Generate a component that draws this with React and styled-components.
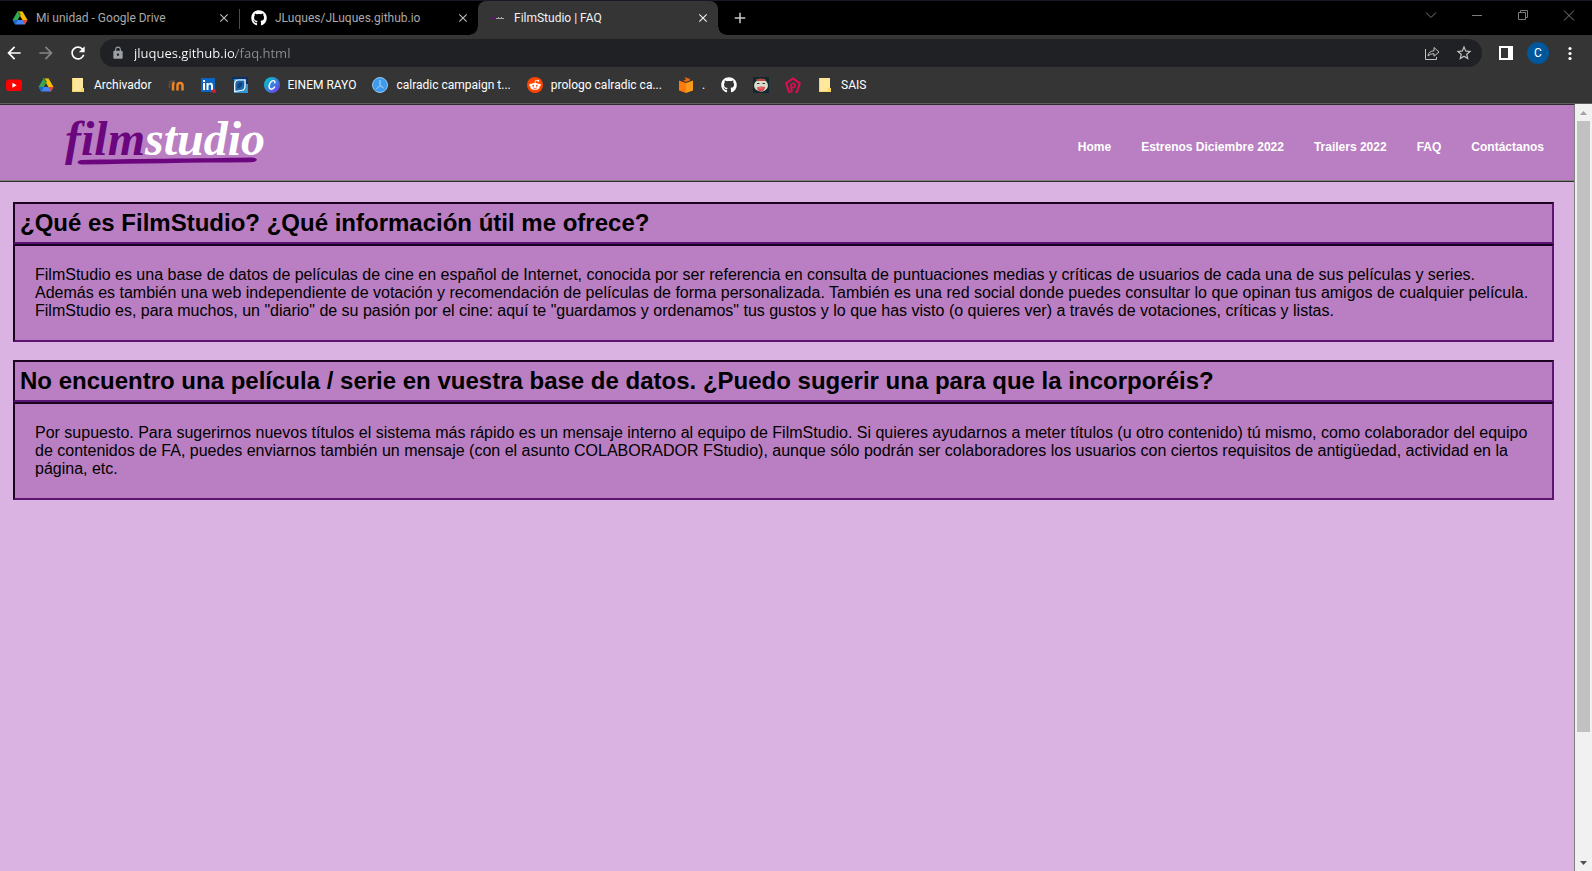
import React from "react";
import styled, { createGlobalStyle, css } from "styled-components";
import { FaGithub } from "react-icons/fa";
import { MdArrowBack, MdArrowForward, MdRefresh, MdLock, MdStarBorder, MdClose, MdAdd } from "react-icons/md";

const GlobalStyle = createGlobalStyle`
  *, *::before, *::after { box-sizing: border-box; }
  body { margin: 0; background: #dab3e2; }
  button { font: inherit; color: inherit; border: 0; padding: 0; background: none; cursor: pointer; }
  svg { display: block; flex: none; }
`;

const uiFont = `"Segoe UI", Roboto, "Noto Sans", sans-serif`;
const addressFont = `"Segoe UI", "Open Sans", "Noto Sans", sans-serif`;

/* ---------- browser window ---------- */

const Window = styled.div`
  display: flex;
  flex-direction: column;
  height: 100vh;
  font-family: ${uiFont};
  font-size: 12px;
  line-height: 16px;
`;

const TabStrip = styled.div`
  display: flex;
  height: 35px;
  background: #000;
  border-top: 1px solid #191926;
  color: #a9a9a9;
`;

const Tab = styled.div`
  position: relative;
  display: flex;
  align-items: center;
  gap: 8px;
  width: 239px;
  padding: 0 8px 0 12px;
  ${(p) => p.$divided && css`
    &::after { content: ""; position: absolute; right: -1px; top: 8px; width: 1px; height: 20px; background: #4a4a4a; }`}
  ${(p) => p.$active && css`
    width: 240px;
    color: #f1f1f1;
    background: #353535;
    border-radius: 8px 8px 0 0;
    &::before, &::after { content: ""; position: absolute; bottom: 0; width: 8px; height: 8px; }
    &::before { left: -8px; background: radial-gradient(circle at 0 0, #000 7px, #353535 8px); }
    &::after { right: -8px; background: radial-gradient(circle at 100% 0, #000 7px, #353535 8px); }
  `}
`;

const TabTitle = styled.button`
  flex: 1;
  min-width: 0;
  text-align: left;
  white-space: nowrap;
`;

const TabClose = styled.button`
  display: grid;
  place-items: center;
  width: 14px;
  height: 16px;
  color: ${(p) => (p.$active ? "#f1f1f1" : "#bdbdbd")};
`;

const NewTab = styled.button`
  display: grid;
  place-items: center;
  width: 28px;
  margin-left: 8px;
  color: #c9c9c9;
`;

const WindowButtons = styled.div`
  display: flex;
  align-items: flex-start;
  margin-left: auto;
`;

const WindowButton = styled.button`
  display: grid;
  place-items: center;
  width: 46px;
  height: 28px;
  color: #7b7b7b;
`;

const Toolbar = styled.div`
  display: flex;
  align-items: center;
  height: 36px;
  padding: 0 6px 0 0;
  background: #353535;
  color: #fff;
`;

const ToolButton = styled.button`
  display: grid;
  place-items: center;
  width: 32px;
  height: 28px;
  color: ${(p) => (p.$dim ? "#858585" : "#fff")};
`;

const Navigation = styled.div`
  display: flex;
  margin: 0 6px 0 -2px;
`;

const AddressBar = styled.div`
  flex: 1;
  display: flex;
  align-items: center;
  height: 28px;
  padding: 0 2px 0 11px;
  border-radius: 14px;
  background: #202124;
  color: #9aa0a6;
`;

const AddressInput = styled.input`
  flex: 1;
  min-width: 0;
  height: 20px;
  margin-left: 9px;
  padding: 0;
  border: 0;
  outline: 0;
  font: 13px/20px ${addressFont};
  color: #fff;
  background: linear-gradient(90deg, #fff 102px, #8d8d8e 102px);
  -webkit-background-clip: text;
  background-clip: text;
  -webkit-text-fill-color: transparent;
`;

const Actions = styled.div`
  display: flex;
  align-items: center;
  margin-left: 8px;
`;

const Avatar = styled.span`
  display: grid;
  place-items: center;
  width: 22px;
  height: 22px;
  border-radius: 50%;
  background: #01579b;
  color: #fff;
`;

const BookmarksBar = styled.nav`
  display: flex;
  align-items: center;
  gap: 16px;
  height: 33px;
  padding: 0 6px 4px;
  background: #353535;
  border-bottom: 1px solid #5e5e5e;
  color: #fff;
`;

const Bookmark = styled.a`
  display: flex;
  align-items: center;
  gap: 8px;
  height: 24px;
  color: inherit;
  text-decoration: none;
  white-space: nowrap;
`;

const Viewport = styled.div`
  flex: 1;
  display: flex;
  min-height: 0;
`;

const Scrollbar = styled.div`
  display: flex;
  flex-direction: column;
  width: 17px;
  background: #f1f1f1;
`;

const ScrollArrow = styled.button`
  display: grid;
  place-items: center;
  height: 17px;
  color: ${(p) => (p.$dim ? "#a3a3a3" : "#505050")};
`;

const ScrollTrack = styled.div`
  flex: 1;
  display: flex;
  flex-direction: column;
  padding: 0 2px;
  &::before { content: ""; flex: 5; background: #c1c1c1; }
  &::after { content: ""; flex: 1; }
`;

/* ---------- web page ---------- */

const Page = styled.div`
  flex: 1;
  min-width: 0;
  overflow: hidden;
  border-top: 1px solid #2d2d2d;
  border-right: 1px solid #808080;
  background: #dab3e2;
  color: #000;
  font-family: Arial, "Liberation Sans", sans-serif;
`;

const SiteHeader = styled.header`
  display: flex;
  align-items: center;
  justify-content: space-between;
  height: 77px;
  padding: 0 30px 0 60px;
  background: #b97fc2;
  border-bottom: 1px solid #2f2f2f;
  box-shadow: inset 0 -1px #80807c;
`;

const SiteNav = styled.nav`
  display: flex;
  gap: 30px;
  padding-top: 8px;
`;

const SiteLink = styled.a`
  color: #fff;
  font-size: 12px;
  line-height: 16px;
  font-weight: 700;
  text-decoration: none;
`;

const Questions = styled.main`
  display: flex;
  flex-direction: column;
  gap: 18px;
  padding: 20px 20px 20px 13px;
`;

const framed = css`
  margin: 0;
  border: 2px solid;
  border-color: #1b0220 #5b1573 #5b1573 #1b0220;
  background: #b97fc2;
`;

const Question = styled.h2`
  ${framed}
  padding: 5px;
  font-size: 24px;
  line-height: 28px;
`;

const Answer = styled.p`
  ${framed}
  padding: 20px;
  font-size: 16px;
  line-height: 18px;
`;

/* ---------- drawings ---------- */

const Svg = ({ size = 16, children, ...rest }) => (
  <svg width={size} height={size} viewBox="0 0 16 16" fill="none" aria-hidden="true" {...rest}>{children}</svg>
);

const DriveIcon = () => (
  <Svg>
    <path d="M5.4 1.5h5.2L8 6z" fill="#188038" />
    <path d="M5.4 1.5 8 6 3.2 14.5.6 10z" fill="#34a853" />
    <path d="M10.6 1.5 15.5 10h-5.1L5.4 1.5z" fill="#fbbc04" />
    <path d="M5.4 1.5h1.5L8.8 4.8 8 6z" fill="#188038" />
    <path d="M5.7 10h9.8l-2.6 4.5H3.2z" fill="#4285f4" />
    <path d="M10.4 10h5.1l-2.6 4.5z" fill="#ea4335" />
    <path d="M5.7 10H.6l2.6 4.5z" fill="#1967d2" />
  </Svg>
);
const YoutubeIcon = () => (
  <Svg>
    <rect y="2.5" width="16" height="11.5" rx="3" fill="#f00" />
    <path d="M6.4 5.7v5l4.3-2.5z" fill="#fff" />
  </Svg>
);
const FolderIcon = () => (
  <Svg>
    <path d="M2 1h11v10h1v4H2z" fill="#ffe79b" />
    <path d="M2.5 1v13.5H11" stroke="#f3d06b" />
    <path d="M11 11h3v4h-3z" fill="#fbd65e" />
  </Svg>
);
const MoodleIcon = () => (
  <Svg>
    <path d="M0 4.5 6 2.500l1.500 1.500L3 6.500z" fill="#514a46" />
    <path d="M1.500 6v5" stroke="#6b4b37" strokeWidth="1.500" />
    <path d="M5 13.500V8m0 0q0-2 1.700-2m2.800 7.500V8.500q0-2.500 2.500-2.500t2.500 2.500v5" stroke="#ef8523" strokeWidth="2.500" />
  </Svg>
);
const LinkedinIcon = () => (
  <Svg>
    <rect x="1" y="1" width="14" height="14" fill="#0a66c2" />
    <path d="M3 6h2v7H3zM3 3h2v2H3zM6.500 6h2v1q1-1.300 2.500-1.200 2 .2 2 3V13h-2V9q0-1.400-1.200-1.400T8.500 9v4h-2z" fill="#fff" />
    <circle cx="14" cy="14" r="2" fill="#d81e2c" />
  </Svg>
);
const BlueBoxIcon = () => (
  <Svg>
    <path d="M0 0h16v16H2V2z" fill="#3595d3" />
    <path d="M0 1h15V0v7" stroke="#0c2f66" strokeWidth="2" />
    <path d="M2.700 14.500V7q0-4 4-4H13v6q0 4.500-4.500 4.500z" stroke="#fff" strokeWidth="1.200" fill="#1c68ac" />
    <path d="M5.500 11.500V8Q6 5.500 9 5.500h1.500q0 5-5 6z" fill="#12417b" />
  </Svg>
);
const CanvaIcon = () => (
  <Svg>
    <defs>
      <linearGradient id="canva" x1="0" y1="0" x2="1" y2="1">
        <stop offset="0.1" stopColor="#00c4cc" /><stop offset="0.55" stopColor="#3f7be0" /><stop offset="1" stopColor="#7d2ae8" />
      </linearGradient>
    </defs>
    <circle cx="8" cy="8" r="8" fill="url(#canva)" />
    <path d="M10.800 5.800q.4-2.400-1.600-2.200C6.700 4 5 7 5.100 9.800c.2 3.300 3.700 3 5.500.2" stroke="#fff" strokeWidth="1.400" strokeLinecap="round" />
  </Svg>
);
const ClockIcon = () => (
  <Svg>
    <circle cx="8" cy="8" r="7.500" fill="#3d9cf0" stroke="#9bc3e6" />
    <path d="M8 3v5.500M8 8.500 4.500 12M8 8.500l3.500 2.500" stroke="#b5d9f7" strokeWidth="1" />
  </Svg>
);
const RedditIcon = () => (
  <Svg>
    <circle cx="8" cy="8" r="8" fill="#ff4500" />
    <ellipse cx="8" cy="9.400" rx="4.700" ry="3.400" fill="#fff" />
    <circle cx="3.400" cy="7.900" r="1.200" fill="#fff" /><circle cx="12.600" cy="7.900" r="1.200" fill="#fff" />
    <path d="M8 6.200 8.700 3.200l2.400.5" stroke="#fff" strokeWidth="0.8" /><circle cx="11.300" cy="3.700" r="1" fill="#fff" />
    <circle cx="6.200" cy="8.700" r="0.9" fill="#ff4500" /><circle cx="9.800" cy="8.700" r="0.9" fill="#ff4500" />
    <path d="M6 10.900q2 1.300 4 0" stroke="#ff4500" strokeWidth="0.7" />
  </Svg>
);
const BookIcon = () => (
  <Svg>
    <path d="M1 3.500 8 6v10l-7-2.500z" fill="#ff7a0c" />
    <path d="M8 6l7-2.500v10L8 16z" fill="#f99a1b" />
    <path d="M6.500 0 12 2v1.500L8 5 5 3.500 8 2.500z" fill="#ec6508" />
  </Svg>
);
const FaceIcon = () => (
  <Svg>
    <path d="M0 0h16v16H0z" fill="#122830" />
    <ellipse cx="8" cy="8.500" rx="7" ry="6" fill="#d7ddcb" />
    <path d="M3 2.500 7 1.500l5 .5 1 2H4z" fill="#b8493f" />
    <path d="M4 10.500q4-1.500 8-.5-.5 4.500-4 4.500t-4-4z" fill="#d9484c" />
    <path d="M4 6.500h2.500M9.500 6.500H12" stroke="#39372f" />
    <path d="M6 11h4" stroke="#e88a86" />
  </Svg>
);
const PentagonIcon = () => (
  <Svg>
    <path d="M5.500 15H4L1.200 6.200 8 1.500l6.800 4.700L12 15h-1.500" stroke="#e00c53" strokeWidth="2" />
    <path d="M6.500 15.500V10" stroke="#e00c53" strokeWidth="2" />
    <circle cx="8" cy="8.500" r="2" stroke="#e00c53" strokeWidth="1.600" />
  </Svg>
);
const FilmFavicon = () => (
  <Svg>
    <path d="M1 8.500 5 8" stroke="#6a0d7d" strokeWidth="1.500" />
    <path d="M6 8.500h8M8 7.500h1M11 7.500h1" stroke="#aaa2ad" />
  </Svg>
);
const ShareIcon = () => (
  <Svg>
    <path d="M1.500 4v10.500h11V12" stroke="#c4c4c4" />
    <path d="M4 11q.7-5 6-5.200V2.500L15 7l-5 4.200V8.700Q6 8.500 4 11z" stroke="#c4c4c4" strokeLinejoin="round" />
  </Svg>
);

const FilmLogo = () => (
  <svg width="208" height="64" viewBox="0 0 208 64" role="img" aria-label="filmstudio">
    <text x="5" y="44" fill="#6b067e" fontFamily="'Liberation Serif', serif" fontSize="48" fontWeight="700" fontStyle="italic">
      film<tspan fill="#fff">studio</tspan>
    </text>
    <path d="M21 49C72 47.800 138 47.500 191 46.500q5 0 6 2.200-1 2.500-7 2.500C130 51.500 78 52.500 22 53.500q-4-.3-4.500-2.300.5-2 3.500-2.200z" fill="#6b067e" />
  </svg>
);

/* ---------- data ---------- */

const bookmarks = [
  { name: "YouTube", Icon: YoutubeIcon },
  { name: "Drive", Icon: DriveIcon },
  { label: "Archivador", Icon: FolderIcon },
  { name: "Moodle", Icon: MoodleIcon },
  { name: "LinkedIn", Icon: LinkedinIcon },
  { name: "Portal", Icon: BlueBoxIcon },
  { label: "EINEM RAYO", Icon: CanvaIcon },
  { label: "calradic campaign t...", Icon: ClockIcon },
  { label: "prologo calradic ca...", Icon: RedditIcon },
  { label: ".", Icon: BookIcon },
  { name: "GitHub", Icon: () => <FaGithub size={16} /> },
  { name: "Avatar", Icon: FaceIcon },
  { name: "Pentagon", Icon: PentagonIcon },
  { label: "SAIS", Icon: FolderIcon },
];

const links = ["Home", "Estrenos Diciembre 2022", "Trailers 2022", "FAQ", "Contáctanos"];

const faq = [
  {
    question: "¿Qué es FilmStudio? ¿Qué información útil me ofrece?",
    answer:
      'FilmStudio es una base de datos de películas de cine en español de Internet, conocida por ser referencia en consulta de puntuaciones medias y críticas de usuarios de cada una de sus películas y series. Además es también una web independiente de votación y recomendación de películas de forma personalizada. También es una red social donde puedes consultar lo que opinan tus amigos de cualquier película. FilmStudio es, para muchos, un "diario" de su pasión por el cine: aquí te "guardamos y ordenamos" tus gustos y lo que has visto (o quieres ver) a través de votaciones, críticas y listas.',
  },
  {
    question: "No encuentro una película / serie en vuestra base de datos. ¿Puedo sugerir una para que la incorporéis?",
    answer:
      "Por supuesto. Para sugerirnos nuevos títulos el sistema más rápido es un mensaje interno al equipo de FilmStudio. Si quieres ayudarnos a meter títulos (u otro contenido) tú mismo, como colaborador del equipo de contenidos de FA, puedes enviarnos también un mensaje (con el asunto COLABORADOR FStudio), aunque sólo podrán ser colaboradores los usuarios con ciertos requisitos de antigüedad, actividad en la página, etc.",
  },
];

const BrowserTab = ({ icon, title, active, divided }) => (
  <Tab $active={active} $divided={divided}>
    {icon}
    <TabTitle>{title}</TabTitle>
    <TabClose $active={active} aria-label={`Cerrar ${title}`}><MdClose size={14} /></TabClose>
  </Tab>
);

export default function App() {
  return (
    <Window>
      <GlobalStyle />
      <TabStrip>
        <BrowserTab icon={<DriveIcon />} title="Mi unidad - Google Drive" divided />
        <BrowserTab icon={<FaGithub size={16} color="#fff" />} title="JLuques/JLuques.github.io" />
        <BrowserTab icon={<FilmFavicon />} title="FilmStudio | FAQ" active />
        <NewTab aria-label="Nueva pestaña"><MdAdd size={18} /></NewTab>
        <WindowButtons>
          <WindowButton aria-label="Buscar pestañas"><Svg stroke="currentColor"><path d="M3 5.500l5 5 5-5" /></Svg></WindowButton>
          <WindowButton aria-label="Minimizar"><Svg stroke="currentColor"><path d="M3 8.500h10" /></Svg></WindowButton>
          <WindowButton aria-label="Restaurar"><Svg stroke="currentColor"><path d="M3.500 5.500h7v7h-7zM5.500 5V3.500h7v7H11" /></Svg></WindowButton>
          <WindowButton aria-label="Cerrar"><Svg stroke="currentColor"><path d="M3 3.500l10 10M13 3.500l-10 10" /></Svg></WindowButton>
        </WindowButtons>
      </TabStrip>
      <Toolbar>
        <Navigation>
          <ToolButton aria-label="Atrás"><MdArrowBack size={20} /></ToolButton>
          <ToolButton aria-label="Adelante" $dim><MdArrowForward size={20} /></ToolButton>
          <ToolButton aria-label="Recargar"><MdRefresh size={20} /></ToolButton>
        </Navigation>
        <AddressBar>
          <MdLock size={14} />
          <AddressInput aria-label="Dirección" defaultValue="jluques.github.io/faq.html" />
          <ToolButton aria-label="Compartir"><ShareIcon /></ToolButton>
          <ToolButton aria-label="Añadir a marcadores"><MdStarBorder size={18} color="#c4c4c4" /></ToolButton>
        </AddressBar>
        <Actions>
          <ToolButton aria-label="Panel lateral"><Svg><path d="M1 1h14v14H1z" fill="#fff" /><path d="M3 3h7v10H3z" fill="#353535" /></Svg></ToolButton>
          <ToolButton aria-label="Perfil"><Avatar>C</Avatar></ToolButton>
          <ToolButton aria-label="Menú"><Svg fill="#fff"><circle cx="8" cy="3.500" r="1.600" /><circle cx="8" cy="8.500" r="1.600" /><circle cx="8" cy="13.500" r="1.600" /></Svg></ToolButton>
        </Actions>
      </Toolbar>
      <BookmarksBar aria-label="Marcadores">
        {bookmarks.map(({ label, name, Icon }) => (
          <Bookmark key={label || name} href="#" aria-label={name}>
            <Icon />
            {label}
          </Bookmark>
        ))}
      </BookmarksBar>
      <Viewport>
        <Page>
          <SiteHeader>
            <FilmLogo />
            <SiteNav>
              {links.map((text) => <SiteLink key={text} href="#">{text}</SiteLink>)}
            </SiteNav>
          </SiteHeader>
          <Questions>
            {faq.map(({ question, answer }) => (
              <section key={question}>
                <Question>{question}</Question>
                <Answer>{answer}</Answer>
              </section>
            ))}
          </Questions>
        </Page>
        <Scrollbar>
          <ScrollArrow aria-label="Subir" $dim><svg width="7" height="4" viewBox="0 0 7 4" fill="currentColor"><path d="M0 4 3.500 0 7 4z" /></svg></ScrollArrow>
          <ScrollTrack />
          <ScrollArrow aria-label="Bajar"><svg width="7" height="4" viewBox="0 0 7 4" fill="currentColor"><path d="M0 0 3.500 4 7 0z" /></svg></ScrollArrow>
        </Scrollbar>
      </Viewport>
    </Window>
  );
}
